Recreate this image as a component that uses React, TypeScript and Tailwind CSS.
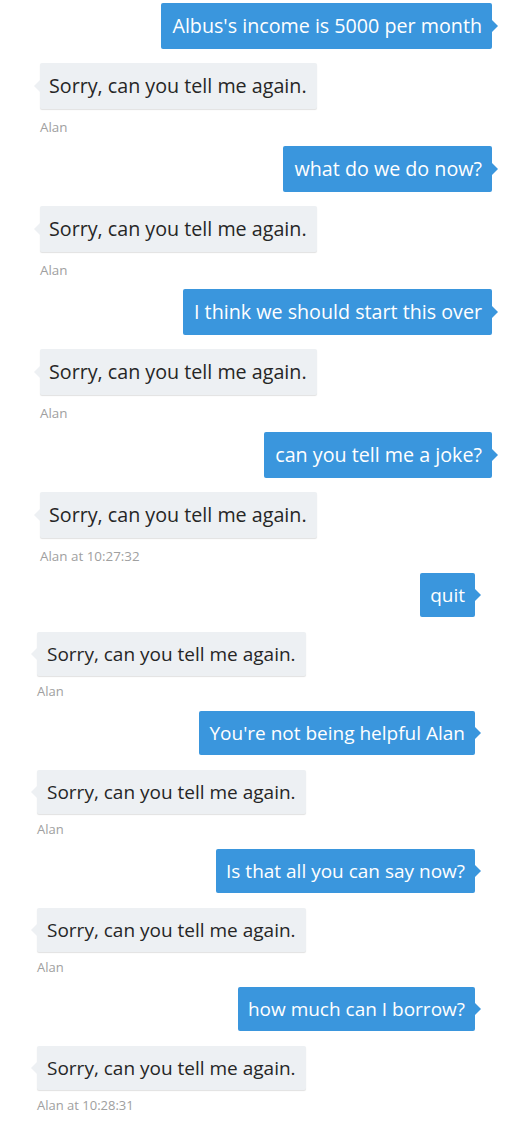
import React from "react";

type Pair = { ask: string; label: string };

const topPairs: Pair[] = [
  { ask: "Albus's income is 5000 per month", label: "Alan" },
  { ask: "what do we do now?", label: "Alan" },
  { ask: "I think we should start this over", label: "Alan" },
  { ask: "can you tell me a joke?", label: "Alan at 10:27:32" },
];

const bottomPairs: Pair[] = [
  { ask: "quit", label: "Alan" },
  { ask: "You're not being helpful Alan", label: "Alan" },
  { ask: "Is that all you can say now?", label: "Alan" },
  { ask: "how much can I borrow?", label: "Alan at 10:28:31" },
];

const REPLY = "Sorry, can you tell me again.";

const UserBubble = ({ text, big }: { text: string; big: boolean }) => (
  <div className="flex justify-end">
    <div
      className={
        big
          ? "relative h-[46px] flex items-center pl-[11px] pr-[10px] bg-[#3a96dd] text-white text-[19.7px] rounded-[2px]"
          : "relative h-[44px] flex items-center pl-[10px] pr-[10px] bg-[#3a96dd] text-white text-[19px] rounded-[2px]"
      }
    >
      {text}
      <span className="absolute right-[-6px] top-1/2 -translate-y-1/2 w-0 h-0 border-y-[6px] border-y-transparent border-l-[6px] border-l-[#3a96dd]" />
    </div>
  </div>
);

const BotBubble = ({ label, big }: { label: string; big: boolean }) => (
  <div className="flex flex-col items-start">
    <div
      className={
        big
          ? "relative h-[46px] flex items-center pl-[9px] pr-[10px] bg-[#edf0f3] text-[#262626] text-[19.7px] rounded-[2px] shadow-[0_1px_1px_rgba(0,0,0,0.12)]"
          : "relative h-[44px] flex items-center pl-[10px] pr-[10px] bg-[#edf0f3] text-[#262626] text-[19px] rounded-[2px] shadow-[0_1px_1px_rgba(0,0,0,0.12)]"
      }
    >
      {REPLY}
      <span className="absolute left-[-6px] top-1/2 -translate-y-1/2 w-0 h-0 border-y-[6px] border-y-transparent border-r-[6px] border-r-[#edf0f3]" />
    </div>
    <div className={big ? "mt-[10px] h-[16px] leading-[16px] text-[13.4px] text-[#a0a0a0]" : "mt-[7px] h-[16px] leading-[16px] text-[13px] text-[#a0a0a0]"}>
      {label}
    </div>
  </div>
);

export default function App() {
  return (
    <div
      className="w-[519px] h-[1125px] bg-white overflow-hidden"
      style={{ fontFamily: '"Open Sans", "Noto Sans", sans-serif' }}
    >
      {/* upper capture */}
      <div className="flex flex-col pt-[3px] pl-[40px] pr-[27px]">
        {topPairs.map((p, i) => (
          <div key={i} className="flex flex-col gap-[14px] mb-[11px]">
            <UserBubble text={p.ask} big />
            <BotBubble label={p.label} big />
          </div>
        ))}
      </div>
      {/* lower capture */}
      <div className="flex flex-col -mt-[2px] pl-[37px] pr-[44px]">
        {bottomPairs.map((p, i) => (
          <div key={i} className="flex flex-col gap-[15px] mb-[12px]">
            <UserBubble text={p.ask} big={false} />
            <BotBubble label={p.label} big={false} />
          </div>
        ))}
      </div>
    </div>
  );
}
